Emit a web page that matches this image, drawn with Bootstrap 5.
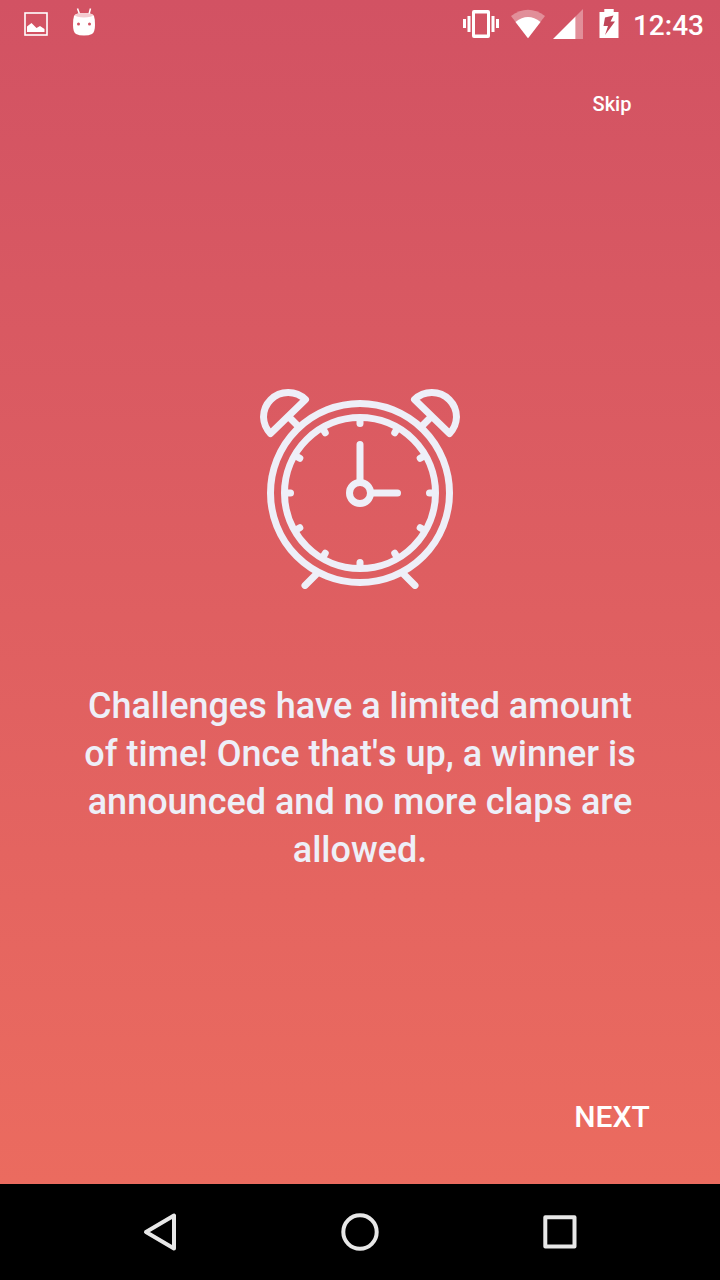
<!DOCTYPE html>
<html lang="en">
<head>
<meta charset="utf-8">
<meta name="viewport" content="width=device-width, initial-scale=1">
<title>Challenges</title>
<link href="https://cdn.jsdelivr.net/npm/bootstrap@5.3.0/dist/css/bootstrap.min.css" rel="stylesheet">
<style>
  body { font-family: Roboto, "Liberation Sans", sans-serif; font-weight: 500; background: #000; color: #fff; }
  .intro-screen { background: linear-gradient(#d25263, #eb6b5f); }
  .status-bar { height: 48px; padding: 0 16px 0 24px; }
  .notices { gap: 24px; }
  .signals { gap: 12px; }
  .radio-icons { gap: 8px; }
  .battery-icon { margin-left: 4px; }
  .clock-time { font-size: 28px; line-height: 51px; margin-left: 2px; }
  .action-row { padding: 0 60px; }
  .action-row .btn { width: 96px; height: 48px; padding: 0; color: #fff; font-weight: 500; border: 0; }
  .skip-row { margin-top: 32px; }
  .next-row { margin-bottom: 44px; }
  .btn-skip { font-size: 20px; }
  .btn-next { font-size: 30px; }
  .slide { padding: 43px 72px 0; gap: 93px; color: #eeeff8; }
  .slide-text { font-size: 36px; line-height: 48px; font-kerning: none; }
  .nav-keys { height: 96px; padding: 0 60px; background: #000; }
  .nav-keys .btn { border: 0; padding: 0; }
</style>
</head>
<body>
<div class="d-flex flex-column min-vh-100">
  <div class="intro-screen d-flex flex-column flex-grow-1">
    <header class="status-bar d-flex justify-content-between">
      <div class="notices d-flex">
        <svg width="24" height="48" fill="#fff" aria-hidden="true">
          <rect x="1" y="13" width="22" height="22" fill="none" stroke="#fff" stroke-width="1.6"/>
          <path d="M3 32V26.500L7.500 23L12.500 28L16 26L20.500 29V32Z"/>
        </svg>
        <svg width="24" height="48" fill="#fff" aria-hidden="true">
          <path d="M5.500 8.500L7.500 14M18.500 8.500L17 14" stroke="#fff" stroke-width="1.5"/>
          <path d="M2 16Q3 13 12 13T22 16Q23 19 23 25Q23 32 20 34Q17 35.500 12 35.500T4 34Q1 32 1 25Q1 19 2 16Z"/>
          <ellipse cx="12" cy="15.300" rx="9" ry="2.200" fill="#f4ccd1"/>
          <circle cx="6.500" cy="24" r="1.500" fill="#d25263"/><circle cx="17.500" cy="24" r="1.500" fill="#d25263"/>
        </svg>
      </div>
      <div class="signals d-flex">
        <svg width="36" height="48" fill="#fff" aria-hidden="true">
          <path fill-rule="evenodd" d="M11 10H25Q27 10 27 12V36Q27 38 25 38H11Q9 38 9 36V12Q9 10 11 10ZM12 13.500V34.500H24V13.500Z"/>
          <path d="M0 19H3V28H0ZM4.500 16H7.500V32H4.500ZM28.500 16H31.500V32H28.500ZM33 19H36V28H33Z"/>
        </svg>
        <div class="radio-icons d-flex">
          <svg width="34" height="48" fill="#fff" aria-hidden="true">
            <path fill-opacity=".35" d="M17 38.300L0 16Q17 3.500 34 16Z"/>
            <path d="M17 38.300L4.500 22Q17 12 29.500 22Z"/>
          </svg>
          <svg width="30" height="48" fill="#fff" aria-hidden="true">
            <path fill-opacity=".35" d="M22.500 39V16.500L30 9V39Z"/>
            <path d="M0 39L22.500 16.500V39Z"/>
          </svg>
        </div>
        <svg width="20" height="48" fill="#fff" class="battery-icon" aria-hidden="true">
          <path d="M5.300 9H14.700V12H19.500V38H.500V12H5.300Z"/>
          <path fill="#c04659" d="M14.500 15.500L6 17.500L4.500 26H9L6 35L16 21.500H11.500Z"/>
        </svg>
        <span class="clock-time">12:43</span>
      </div>
    </header>

    <div class="action-row skip-row d-flex justify-content-end">
      <button type="button" class="btn btn-skip">Skip</button>
    </div>

    <main class="slide d-flex flex-column flex-grow-1 align-items-center justify-content-center text-center">
      <svg width="200" height="200" viewBox="10 9 200 200" fill="none" stroke="currentColor" stroke-width="7" stroke-linecap="round" stroke-linejoin="round" role="img" aria-label="Alarm clock">
        <circle cx="110" cy="113" r="89.500"/>
        <circle cx="110" cy="113" r="75.500"/>
        <circle cx="110" cy="113" r="10.500"/>
        <path d="M110 64.500V102M121 113H147.500"/>
        <g id="ticks">
          <path id="tick" d="M110 39V43.500"/>
          <use href="#tick" transform="rotate(30 110 113)"/>
          <use href="#tick" transform="rotate(60 110 113)"/>
          <use href="#tick" transform="rotate(90 110 113)"/>
          <use href="#tick" transform="rotate(120 110 113)"/>
          <use href="#tick" transform="rotate(150 110 113)"/>
          <use href="#tick" transform="rotate(180 110 113)"/>
          <use href="#tick" transform="rotate(210 110 113)"/>
          <use href="#tick" transform="rotate(240 110 113)"/>
          <use href="#tick" transform="rotate(270 110 113)"/>
          <use href="#tick" transform="rotate(300 110 113)"/>
          <use href="#tick" transform="rotate(330 110 113)"/>
        </g>
        <path id="bell" d="M55.500 19.500A25 25 0 0 0 38 12.500A24.500 24.500 0 0 0 13.500 37A25 25 0 0 0 20.500 53.500ZM39.500 37.500L47 45M66 194.500L55 205.500"/>
        <use href="#bell" transform="matrix(-1 0 0 1 220 0)"/>
      </svg>
      <p class="slide-text m-0">Challenges have a limited amount of time! Once that's up, a winner is announced and no more claps are allowed.</p>
    </main>

    <div class="action-row next-row d-flex justify-content-end">
      <button type="button" class="btn btn-next">NEXT</button>
    </div>
  </div>

  <nav class="nav-keys d-flex align-items-stretch" aria-label="System">
    <button type="button" class="btn flex-fill" aria-label="Back">
      <svg width="40" height="40" fill="none" stroke="#e8e8e8" stroke-width="4" stroke-linejoin="round"><path d="M34 3.500V36.500L6 20Z"/></svg>
    </button>
    <button type="button" class="btn flex-fill" aria-label="Home">
      <svg width="40" height="40" fill="none" stroke="#e8e8e8" stroke-width="4"><circle cx="20" cy="20" r="16.700"/></svg>
    </button>
    <button type="button" class="btn flex-fill" aria-label="Recent apps">
      <svg width="40" height="40" fill="none" stroke="#e8e8e8" stroke-width="4" stroke-linejoin="round"><rect x="5.300" y="5.300" width="29.200" height="29.200"/></svg>
    </button>
  </nav>
</div>
<script src="https://cdn.jsdelivr.net/npm/bootstrap@5.3.0/dist/js/bootstrap.bundle.min.js"></script>
</body>
</html>
